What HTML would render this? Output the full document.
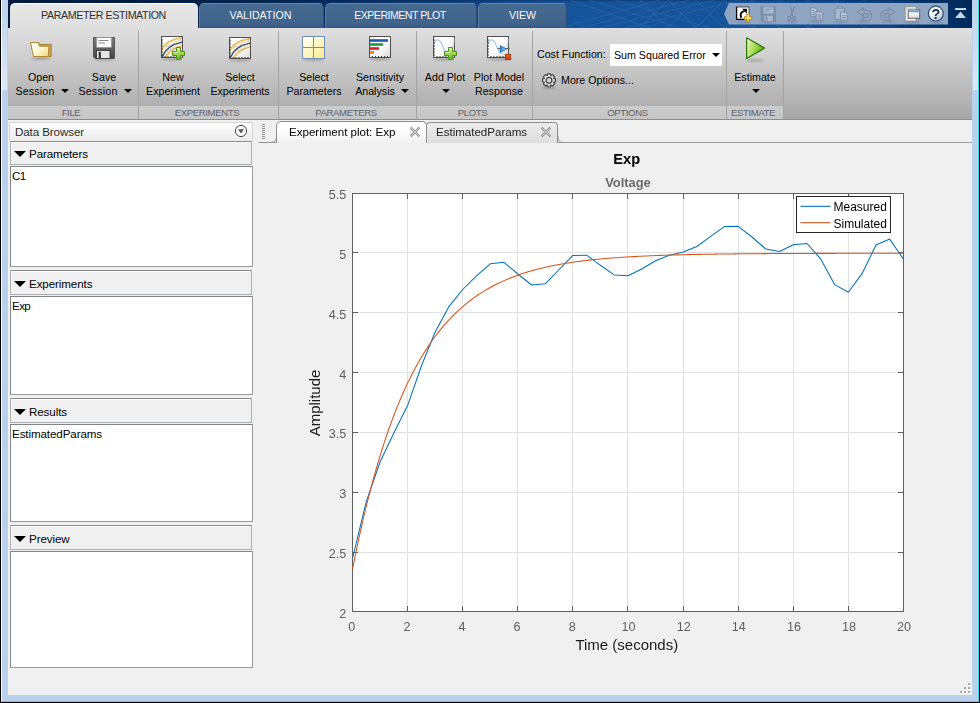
<!DOCTYPE html>
<html>
<head>
<meta charset="utf-8">
<title>Parameter Estimation</title>
<style>
html,body{margin:0;padding:0;}
body{width:980px;height:703px;overflow:hidden;background:#f0f0f0;position:relative;font-family:"Liberation Sans",sans-serif;}
.abs{position:absolute;}
#frame-l0{left:0;top:0;width:1px;height:703px;background:#000;}
#frame-l1{left:1px;top:0;width:1px;height:702px;background:#fff;}
#frame-l2{left:2px;top:0;width:6px;height:701px;background:#b9d1ea;}
#frame-r2{left:972px;top:0;width:6px;height:701px;background:#b9d1ea;}
#frame-r1{left:978px;top:0;width:1px;height:702px;background:#3fd7f3;}
#frame-r0{left:979px;top:0;width:1px;height:703px;background:#000;}
#frame-b2{left:2px;top:695px;width:976px;height:6px;background:#b9d1ea;}
#frame-b1{left:1px;top:701px;width:978px;height:1px;background:#3fd7f3;}
#frame-b0{left:0;top:702px;width:980px;height:1px;background:#000;}
/* header */
#hdr{left:8px;top:0;width:964px;height:28px;background:linear-gradient(180deg,rgba(0,20,50,0.35) 0px,rgba(0,20,50,0) 2px),linear-gradient(90deg,#001c40 0px,#00224c 190px,#052f66 330px,#0e4486 470px,#15539a 560px,#15539a 780px,#0b4282 880px,#002e64 945px,#002a5c 964px);}
.tab{top:3px;height:25px;box-sizing:border-box;text-align:center;font-size:10.67px;line-height:24px;white-space:nowrap;}
.tab.on{background:linear-gradient(#e6e6e6,#dfdfdf);border-top:1px solid #fff;border-radius:5px 5px 0 0;color:#303030;letter-spacing:-0.5px;}
.tab.off{height:25px;background:linear-gradient(#46698f 0%,#41648c 80%,#36587f 100%);border-top:1px solid #6486ad;border-left:1px solid #5a7ca5;border-right:1px solid #2e4f78;border-radius:5px 5px 0 0;color:#f4f6fa;line-height:22px;}
#qab{left:724px;top:3px;width:224px;height:22px;background:#8fa3bf;}
/* toolstrip */
#ts{left:8px;top:28px;width:964px;height:91px;background:linear-gradient(#dfdfdf 0%,#d6d6d6 20%,#c5c5c5 48%,#b4b4b4 78%,#a6a6a6 100%);}
#tsband{left:8px;top:106px;width:776px;height:13px;background:linear-gradient(#cccccc,#c5c5c5);}
#tsline{left:8px;top:119px;width:964px;height:1px;background:#8c8c8c;}
.sep{top:31px;width:1px;height:88px;background:#a3a3a3;}
.seclab{top:106px;height:13px;line-height:13px;font-size:9.6px;color:#5e636e;text-align:center;letter-spacing:-0.4px;}
.btnlab{font-size:10.67px;line-height:14px;color:#000;text-align:center;white-space:nowrap;}
.tri{width:0;height:0;border-left:4px solid transparent;border-right:4px solid transparent;border-top:4px solid #000;}
/* data browser */
.seg{font-family:"Liberation Sans",sans-serif;font-size:11.6px;color:#000;white-space:nowrap;}
#dbtitle{left:9px;top:122px;width:244px;height:19px;box-sizing:border-box;border:1px solid #d5d5d5;border-bottom:none;background:linear-gradient(#fdfdfd,#ececec);}
.phead{left:10px;width:242px;height:24px;box-sizing:border-box;border:1px solid #aeaeae;border-top-color:#8c8c8c;background:#f0f0f0;box-shadow:inset 1px 1px 0 #fbfbfb;}
.pbox{left:10px;width:243px;box-sizing:border-box;border:1px solid #7f848d;border-right-color:#9a9a9a;border-bottom-color:#9a9a9a;background:#fff;}
.ptri{width:0;height:0;border-left:6px solid transparent;border-right:6px solid transparent;border-top:6px solid #000;}
.grip{width:2px;height:2px;background:#aca899;box-shadow:1px 1px 0 #fff;}
#plotsvg{will-change:transform;}
</style>
</head>
<body>
<!-- window frame -->
<div class="abs" id="hdr"></div>
<div class="abs" id="ts"></div>
<div class="abs" id="tsband"></div>
<div class="abs" id="tsline"></div>

<!-- MESH -->
<svg class="abs" style="left:540px;top:0" width="432" height="28" viewBox="0 0 432 28">
  <defs><linearGradient id="gMM" x1="0" y1="0" x2="1" y2="0"><stop offset="0" stop-color="#fff"/><stop offset="0.7" stop-color="#fff"/><stop offset="0.9" stop-color="#000"/></linearGradient><mask id="meshMask"><rect x="0" y="0" width="432" height="28" fill="url(#gMM)"/></mask></defs>
  <g stroke="#7fa6d8" stroke-width="0.700" fill="none" opacity="0.220" mask="url(#meshMask)">
    <path d="M20 28 L120 0 M40 28 L150 0 M60 28 L175 0 M85 28 L200 0 M30 0 L110 28 M50 0 L140 28 M75 0 L170 28"/>
    <path d="M100 28 L128 0 M128 28 L156 0 M156 28 L184 0 M184 28 L212 0 M212 28 L240 0 M240 28 L268 0 M268 28 L296 0 M296 28 L324 0 M324 28 L352 0 M352 28 L380 0 M380 28 L408 0 M408 28 L432 4"/>
    <path d="M100 0 L128 28 M128 0 L156 28 M156 0 L184 28 M184 0 L212 28 M212 0 L240 28 M240 0 L268 28 M268 0 L296 28 M296 0 L324 28 M324 0 L352 28 M352 0 L380 28 M380 0 L408 28 M408 0 L432 24"/>
  </g>
</svg>
<!-- /MESH -->
<!-- tabs -->
<div class="abs tab on" style="left:10px;width:188px;letter-spacing:-0.4px;padding-right:1px;line-height:22px;">PARAMETER ESTIMATION</div>
<div class="abs tab off" style="left:199px;width:125px;padding-right:2px;">VALIDATION</div>
<div class="abs tab off" style="left:325px;width:152px;letter-spacing:-0.55px;padding-right:2px;">EXPERIMENT PLOT</div>
<div class="abs tab off" style="left:478px;width:89px;">VIEW</div>
<!-- QAB -->
<svg class="abs" style="left:720px;top:0;will-change:transform" width="252" height="28" viewBox="720 0 252 28">
  <defs>
    <linearGradient id="gHelp" x1="0.2" y1="0" x2="0.7" y2="1"><stop offset="0" stop-color="#ffffff"/><stop offset="0.5" stop-color="#eef3f7"/><stop offset="1" stop-color="#b4c4d4"/></linearGradient><linearGradient id="gWin" x1="0" y1="0" x2="0" y2="1"><stop offset="0.3" stop-color="#ffffff"/><stop offset="1" stop-color="#d6d6d6"/></linearGradient>
    <linearGradient id="gYel" x1="0" y1="0" x2="0" y2="1"><stop offset="0" stop-color="#fff6b0"/><stop offset="1" stop-color="#f2c21a"/></linearGradient>
    <filter id="blur2" x="-20%" y="-150%" width="140%" height="400%"><feGaussianBlur stdDeviation="0.9"/></filter>
  </defs>
  <path d="M724 13.700 L729 3 L948 3 L948 24.500 L729 24.500 Z" fill="#90a5c2"/>
  <!-- shadows -->
  <g fill="#5f7698" opacity="0.55" filter="url(#blur2)">
    <ellipse cx="743" cy="21.800" rx="7" ry="1"/><ellipse cx="768" cy="22.300" rx="7" ry="1"/><ellipse cx="792" cy="22" rx="5" ry="1"/>
    <ellipse cx="816" cy="21.600" rx="7" ry="1"/><ellipse cx="841" cy="21.900" rx="7" ry="1"/><ellipse cx="864" cy="21.600" rx="7" ry="1"/>
    <ellipse cx="888" cy="21.600" rx="7" ry="1"/><ellipse cx="912" cy="22.200" rx="8" ry="1"/><ellipse cx="936" cy="22.400" rx="7" ry="1"/>
  </g>
  <!-- shortcut -->
  <rect x="736.500" y="7" width="12.500" height="12.500" fill="#fff" stroke="#2a2a2a" stroke-width="0.800"/>
  <path d="M736.600 7v12.300h12.400" fill="none" stroke="#000" stroke-width="1.300"/>
  <path d="M741.200 17.800 C739.600 14 741.300 11.600 744.600 11" fill="none" stroke="#111" stroke-width="2.100"/>
  <path d="M742 8.800 L747 8.800 L747 13.800 Z" fill="#111"/>
  <path d="M746.700 14.300h2.800v2.400h2.400v2.800h-2.400v2.400h-2.800v-2.400h-2.400v-2.800h2.400z" fill="url(#gYel)" stroke="#b8860b" stroke-width="0.900" stroke-linejoin="round"/>
  <!-- save disabled -->
  <path d="M761 7 h14.500 v14.500 h-13.300 l-1.200 -1.200 z" fill="#7e8fa9" stroke="#7686a0" stroke-width="0.600"/>
  <rect x="763.300" y="7.300" width="10" height="6.200" fill="#afbed3"/>
  <path d="M764.500 9.200h7.500M764.500 11.300h5" stroke="#7e8fa9" stroke-width="0.900"/>
  <rect x="764.300" y="15.800" width="8.500" height="5.600" fill="#aab9ce"/>
  <rect x="765.500" y="16.600" width="2" height="4.800" fill="#7e8fa9"/>
  <!-- cut -->
  <path d="M790.300 6.500 L792.800 16 M794.800 6.500 L790.800 16" fill="none" stroke="#7787a1" stroke-width="1.100"/>
  <ellipse cx="789.300" cy="18.500" rx="1.500" ry="2.300" fill="none" stroke="#7787a1" stroke-width="1.100"/>
  <ellipse cx="794.300" cy="18.500" rx="1.500" ry="2.300" fill="none" stroke="#7787a1" stroke-width="1.100"/>
  <!-- copy -->
  <g fill="#b3c2d7" stroke="#7787a1" stroke-width="0.900">
    <path d="M810.500 7.800h4.500l2.300 2.300v6.200h-6.800z"/>
    <path d="M816 11.500h4.500l2.300 2.300v6.500h-6.800z"/>
  </g>
  <path d="M811.800 10.500h2.500M811.800 12.500h3.500M811.800 14.500h3.500M817.300 15h4M817.300 17h4M817.300 18.800h4" stroke="#7787a1" stroke-width="0.800"/>
  <!-- paste -->
  <path d="M835 8.300h9.800v11h-9.800z" fill="#a7b6cc" stroke="#7787a1" stroke-width="0.900"/>
  <path d="M837.800 8.300v-1.500h4.200v1.500" fill="#b3c2d7" stroke="#7787a1" stroke-width="0.900"/>
  <path d="M840.500 12h4.500l2.300 2.300v6.500h-6.800z" fill="#b8c6da" stroke="#7787a1" stroke-width="0.900"/>
  <path d="M841.800 15.500h4M841.800 17.300h4M841.800 19.100h4" stroke="#7787a1" stroke-width="0.800"/>
  <!-- undo -->
  <path d="M857.300 12 L863.300 7.800 L863.300 10.300 L866.300 10.300 C869.900 10.300 871.600 12.700 871.600 15.400 C871.600 18.200 869.700 20.500 866.300 20.500 L862.800 20.500 L862.800 17.400 L866 17.400 C867.600 17.400 868.300 16.500 868.300 15.400 C868.300 14.300 867.600 13.500 866 13.500 L863.300 13.500 L863.300 16.200 Z" fill="#93a4bc" stroke="#7787a1" stroke-width="1" stroke-linejoin="round"/>
  <!-- redo -->
  <path d="M894.900 12 L888.900 7.800 L888.900 10.300 L885.900 10.300 C882.300 10.300 880.600 12.700 880.600 15.400 C880.600 18.200 882.500 20.500 885.900 20.500 L889.400 20.500 L889.400 17.400 L886.200 17.400 C884.600 17.400 883.900 16.500 883.900 15.400 C883.900 14.300 884.600 13.500 886.200 13.500 L888.900 13.500 L888.900 16.200 Z" fill="#93a4bc" stroke="#7787a1" stroke-width="1" stroke-linejoin="round"/>
  <!-- windows -->
  <rect x="905.200" y="6.800" width="11" height="14.200" fill="#f4f4f4" stroke="#8a8a8a" stroke-width="0.800"/>
  <path d="M905.600 8.800h10.200" stroke="#bdbdbd" stroke-width="0.900"/>
  <rect x="904.300" y="14.300" width="1.800" height="1.800" fill="#e8e8e8" stroke="#8a8a8a" stroke-width="0.500"/>
  <rect x="908.200" y="10" width="11.500" height="8.300" fill="url(#gWin)" stroke="#5a5a5a" stroke-width="0.900"/>
  <rect x="908.700" y="10.500" width="10.500" height="1.800" fill="#6aa2d8"/>
  <!-- help -->
  <circle cx="935.800" cy="13.600" r="7.400" fill="url(#gHelp)" stroke="#2c4c78" stroke-width="1.200"/>
  <text x="935.900" y="18.700" font-family="Liberation Sans, sans-serif" font-size="14.500" font-weight="bold" fill="#1d2e48" text-anchor="middle">?</text>
  <!-- minimize -->
  <rect x="955" y="8.200" width="11" height="1.800" fill="#e8eef6"/>
  <path d="M960.500 11.600 L966 18 L955 18 Z" fill="#c9d6e4"/>
</svg>
<!-- /QAB -->

<!-- TOOLSTRIP-CONTENT -->
<!-- separators -->
<div class="abs sep" style="left:138px"></div>
<div class="abs sep" style="left:278px"></div>
<div class="abs sep" style="left:416px"></div>
<div class="abs sep" style="left:532px"></div>
<div class="abs sep" style="left:726px"></div>
<div class="abs sep" style="left:783px"></div>
<!-- section labels -->
<div class="abs seclab" style="left:8px;width:126px;">FILE</div>
<div class="abs seclab" style="left:138px;width:138px;">EXPERIMENTS</div>
<div class="abs seclab" style="left:278px;width:136px;">PARAMETERS</div>
<div class="abs seclab" style="left:416px;width:113px;">PLOTS</div>
<div class="abs seclab" style="left:532px;width:191px;">OPTIONS</div>
<div class="abs seclab" style="left:726px;width:54px;">ESTIMATE</div>

<!-- icon: open folder -->
<svg class="abs" style="left:26px;top:34px" width="30" height="30" viewBox="0 0 30 30">
  <defs>
    <linearGradient id="gFold" x1="0" y1="0" x2="1" y2="1"><stop offset="0" stop-color="#ffffff"/><stop offset="0.45" stop-color="#fffbe0"/><stop offset="1" stop-color="#f3d96a"/></linearGradient>
    <filter id="blur1" x="-20%" y="-100%" width="140%" height="300%"><feGaussianBlur stdDeviation="1.1"/></filter>
  </defs>
  <ellipse cx="15" cy="24.3" rx="10" ry="1.3" fill="#707070" opacity="0.55" filter="url(#blur1)"/>
  <path d="M4.500 8.500 L12.500 8.500 L14 10.500 L25.300 10.500 L25 22.500 L8 22.500 Z" fill="#cfa650" stroke="#9c7424" stroke-width="0.900"/>
  <path d="M4.500 8.500 L12 8.500 L13.500 12.300 L22.800 12.300 L22.300 22.500 L7.500 22.500 Z" fill="url(#gFold)" stroke="#ad8430" stroke-width="0.900"/>
</svg>
<!-- icon: save -->
<svg class="abs" style="left:90px;top:34px" width="30" height="30" viewBox="0 0 30 30">
  <defs>
    <linearGradient id="gSave" x1="0" y1="0" x2="0" y2="1"><stop offset="0" stop-color="#7c7c7c"/><stop offset="1" stop-color="#444444"/></linearGradient>
  </defs>
  <ellipse cx="14" cy="25.6" rx="10" ry="1.2" fill="#707070" opacity="0.5" filter="url(#blur1)"/>
  <path d="M3.500 3.500 L24.500 3.500 L24.500 24.500 L5 24.500 L3.500 23 Z" fill="url(#gSave)" stroke="#5a5a5a" stroke-width="1"/>
  <rect x="6.5" y="3.5" width="15" height="10" fill="#fafafa" stroke="#8a8a8a" stroke-width="0.6"/>
  <rect x="8.5" y="6" width="10" height="1" fill="#8a8a8a"/>
  <rect x="8.5" y="8.5" width="6.5" height="1" fill="#8a8a8a"/>
  <rect x="6.5" y="16.5" width="13.5" height="8" fill="#e6e6e6" stroke="#2f2f2f" stroke-width="0.8"/>
  <rect x="8.7" y="17.8" width="2.2" height="6.4" fill="#333"/>
</svg>
<div class="abs btnlab" style="left:11px;top:70px;width:60px;">Open</div>
<div class="abs btnlab" style="left:5px;top:84px;width:60px;letter-spacing:0.15px;">Session</div>
<div class="abs tri" style="left:61px;top:89px;"></div>
<div class="abs btnlab" style="left:74px;top:70px;width:60px;">Save</div>
<div class="abs btnlab" style="left:68px;top:84px;width:60px;letter-spacing:0.15px;">Session</div>
<div class="abs tri" style="left:124px;top:89px;"></div>

<!-- icon: new experiment -->
<svg class="abs" style="left:158px;top:33px" width="32" height="32" viewBox="0 0 32 32">
  <defs>
    <linearGradient id="gPlus" x1="0" y1="0" x2="0" y2="1"><stop offset="0" stop-color="#dcf5a0"/><stop offset="0.5" stop-color="#9fd84c"/><stop offset="1" stop-color="#62b222"/></linearGradient>
    <linearGradient id="gBox" x1="0" y1="0" x2="1" y2="1"><stop offset="0.5" stop-color="#ffffff"/><stop offset="1" stop-color="#d9d9d9"/></linearGradient>
    <clipPath id="cpBox"><rect x="0.5" y="0.5" width="20" height="20"/></clipPath>
    <g id="expBox">
      <rect x="0" y="0" width="21" height="21" fill="url(#gBox)" stroke="#505050" stroke-width="1"/>
      <g clip-path="url(#cpBox)">
        <path d="M0 14 C3 7 11 2.500 21 0.500 L21 9.500 C13 11 7 15.500 3.500 22 L0 22 Z" fill="#f7ead0"/>
        <path d="M0 13 C3 6.500 11 2.500 21 1" fill="none" stroke="#e4bd5c" stroke-width="1.500"/>
        <path d="M3.500 22 C7 15 13 11 21 9.500" fill="none" stroke="#e4bd5c" stroke-width="1.500"/>
        <path d="M0.500 21 C3.500 13 10.500 7.500 21 5.500" fill="none" stroke="#1d4a86" stroke-width="1.300"/>
        <path d="M3 10.500 L6 9 L9 9.500 L12 7.500 L15 8 L17 6.500 M18 4.500 L19.500 2.500 L18.500 1.500 M5 14 L8 12.500 L11 13.500 L15 11" fill="none" stroke="#8f8f8f" stroke-width="0.400"/>
      </g>
      <path d="M0 3.500h1.500M0 6.500h1.500M0 9.500h1.500M0 12.500h1.500M0 15.500h1.500M0 18.500h1.500 M3.500 21v-1.500M6.500 21v-1.500M9.500 21v-1.500M12.500 21v-1.500M15.500 21v-1.500M18.500 21v-1.500" stroke="#303030" stroke-width="1" fill="none"/>
    </g>
    <g id="plusG">
      <path d="M4.5 0.5 h4 v4 h4 v4 h-4 v4 h-4 v-4 h-4 v-4 h4 z" fill="url(#gPlus)" stroke="#4a9418" stroke-width="1" stroke-linejoin="round"/>
      <path d="M5.5 1.6 h2 M1.6 5.5 h3.4" stroke="#f0ffd0" stroke-width="1" fill="none" opacity="0.8"/>
    </g>
  </defs>
  <ellipse cx="14" cy="26.2" rx="11" ry="1.3" fill="#707070" opacity="0.5" filter="url(#blur1)"/>
  <use href="#expBox" x="3.5" y="3.5"/>
  <use href="#plusG" x="14" y="14"/>
</svg>
<!-- icon: select experiments -->
<svg class="abs" style="left:226px;top:34px" width="32" height="32" viewBox="0 0 32 32">
  <ellipse cx="14" cy="26.2" rx="11" ry="1.3" fill="#707070" opacity="0.5" filter="url(#blur1)"/>
  <use href="#expBox" x="3.5" y="3.5"/>
</svg>
<div class="abs btnlab" style="left:143px;top:70px;width:60px;">New</div>
<div class="abs btnlab" style="left:143px;top:84px;width:60px;">Experiment</div>
<div class="abs btnlab" style="left:210px;top:70px;width:60px;">Select</div>
<div class="abs btnlab" style="left:210px;top:84px;width:60px;">Experiments</div>

<!-- icon: select parameters -->
<svg class="abs" style="left:298px;top:32px" width="32" height="32" viewBox="0 0 32 32">
  <defs>
    <linearGradient id="gGrid" x1="0" y1="0" x2="1" y2="1"><stop offset="0" stop-color="#ffffff"/><stop offset="0.25" stop-color="#fffce0"/><stop offset="1" stop-color="#fbe98a"/></linearGradient>
  </defs>
  <ellipse cx="15.5" cy="27.6" rx="11" ry="1.3" fill="#707070" opacity="0.5" filter="url(#blur1)"/>
  <rect x="4.5" y="4.5" width="22" height="22" fill="url(#gGrid)" stroke="#6f8fb8" stroke-width="1"/>
  <path d="M15.5 4.5v22M4.5 15.5h22" stroke="#6f8fb8" stroke-width="1" fill="none"/>
</svg>
<!-- icon: sensitivity -->
<svg class="abs" style="left:365px;top:33px" width="32" height="32" viewBox="0 0 32 32">
  <ellipse cx="15" cy="26" rx="11" ry="1.3" fill="#707070" opacity="0.5" filter="url(#blur1)"/>
  <rect x="4.5" y="3.5" width="21" height="21" fill="url(#gBox)" stroke="#505050" stroke-width="1"/>
  <rect x="5" y="6.2" width="18" height="2.6" fill="#1b5bb0"/>
  <rect x="5" y="10.2" width="13" height="2.6" fill="#1f9a40"/>
  <rect x="5" y="14.2" width="9" height="2.6" fill="#d9202b"/>
  <rect x="5" y="18.2" width="4" height="2.6" fill="#e07f1c"/>
  <path d="M7.5 24.500v-1.500M10.500 24.500v-1.500M13.500 24.500v-1.500M16.500 24.500v-1.500M19.500 24.500v-1.500M22.500 24.500v-1.500" stroke="#303030" stroke-width="1" fill="none"/>
</svg>
<div class="abs btnlab" style="left:284px;top:70px;width:60px;">Select</div>
<div class="abs btnlab" style="left:284px;top:84px;width:60px;">Parameters</div>
<div class="abs btnlab" style="left:350px;top:70px;width:60px;">Sensitivity</div>
<div class="abs btnlab" style="left:345px;top:84px;width:60px;">Analysis</div>
<div class="abs tri" style="left:401px;top:89px;"></div>

<!-- icon: add plot -->
<svg class="abs" style="left:429px;top:32px" width="32" height="32" viewBox="0 0 32 32">
  <defs>
    <g id="plotBox">
      <rect x="0" y="0" width="21" height="21" fill="url(#gBox)" stroke="#505050" stroke-width="1"/>
      <path d="M0.5 8 C2 2.500 5.500 2 7.500 6 C9.500 10 11 16 14 17.500" fill="none" stroke="#a9c8ea" stroke-width="1.200"/>
      <path d="M19.800 12 C20.200 9 20.400 6 20.500 2" fill="none" stroke="#c5daf0" stroke-width="0.900"/>
      <path d="M0 3.5h1.5M0 6.5h1.5M0 9.5h1.5M0 12.5h1.5M0 15.5h1.5M0 18.5h1.5 M3.5 21v-1.5M6.5 21v-1.5M9.5 21v-1.5M12.5 21v-1.5M15.5 21v-1.5M18.5 21v-1.5" stroke="#303030" stroke-width="1" fill="none"/>
    </g>
  </defs>
  <ellipse cx="15" cy="27.2" rx="11" ry="1.3" fill="#707070" opacity="0.5" filter="url(#blur1)"/>
  <use href="#plotBox" x="4.500" y="4.500"/>
  <use href="#plusG" x="15" y="15"/>
</svg>
<!-- icon: plot model response -->
<svg class="abs" style="left:483px;top:32px" width="32" height="32" viewBox="0 0 32 32">
  <defs>
    <linearGradient id="gPlay" x1="0" y1="0" x2="1" y2="0"><stop offset="0" stop-color="#2a7fd0"/><stop offset="1" stop-color="#a8d6f6"/></linearGradient>
    <linearGradient id="gStop" x1="0" y1="0" x2="0" y2="1"><stop offset="0" stop-color="#f06a2a"/><stop offset="1" stop-color="#c83808"/></linearGradient>
  </defs>
  <ellipse cx="15" cy="27.2" rx="11" ry="1.3" fill="#707070" opacity="0.5" filter="url(#blur1)"/>
  <use href="#plotBox" x="4.500" y="4.500"/>
  <path d="M14.5 16.5 h3 M22 16.5 h4.5" stroke="#606060" stroke-width="1"/>
  <path d="M17.200 13.600 L23.800 17 L17.200 20.400 Z" fill="url(#gPlay)" stroke="#1a62ae" stroke-width="0.700"/>
  <rect x="22.300" y="22.300" width="5.400" height="5.400" fill="url(#gStop)" stroke="#a03008" stroke-width="0.8"/>
</svg>
<div class="abs btnlab" style="left:415px;top:70px;width:60px;">Add Plot</div>
<div class="abs tri" style="left:442px;top:89px;"></div>
<div class="abs btnlab" style="left:469px;top:70px;width:60px;">Plot Model</div>
<div class="abs btnlab" style="left:469px;top:84px;width:60px;">Response</div>

<!-- options -->
<div class="abs btnlab" style="left:537px;top:47px;text-align:left;">Cost Function:</div>
<div class="abs" style="left:610px;top:44px;width:112px;height:22px;background:#fff;"></div>
<div class="abs btnlab" style="left:614px;top:48px;text-align:left;letter-spacing:0px;">Sum Squared Error</div>
<div class="abs tri" style="left:712px;top:53px;"></div>
<svg class="abs" style="left:539px;top:70px" width="20" height="20" viewBox="0 0 20 20">
  <defs><radialGradient id="gGear" cx="0.4" cy="0.35" r="0.7"><stop offset="0" stop-color="#ffffff"/><stop offset="1" stop-color="#d4d4d4"/></radialGradient></defs>
  <ellipse cx="10" cy="17.800" rx="6.500" ry="1" fill="#606060" opacity="0.500" filter="url(#blur1)"/>
  <g transform="translate(10,10.300)">
    <path d="M-1.82 -4.66 L-1.47 -6.44 L1.47 -6.44 L1.82 -4.66 L2.00 -4.58 L3.51 -5.59 L5.59 -3.51 L4.58 -2.00 L4.66 -1.82 L6.44 -1.47 L6.44 1.47 L4.66 1.82 L4.58 2.00 L5.59 3.51 L3.51 5.59 L2.00 4.58 L1.82 4.66 L1.47 6.44 L-1.47 6.44 L-1.82 4.66 L-2.00 4.58 L-3.51 5.59 L-5.59 3.51 L-4.58 2.00 L-4.66 1.82 L-6.44 1.47 L-6.44 -1.47 L-4.66 -1.82 L-4.58 -2.00 L-5.59 -3.51 L-3.51 -5.59 L-2.00 -4.58 Z" fill="url(#gGear)" stroke="#3a3a3a" stroke-width="1.150" stroke-linejoin="round"/>
    <circle cx="0" cy="0" r="3" fill="#d2d2d2" stroke="#333" stroke-width="1.200"/>
  </g>
</svg>
<div class="abs btnlab" style="left:561px;top:73px;text-align:left;">More Options...</div>

<!-- estimate -->
<svg class="abs" style="left:740px;top:33px" width="32" height="32" viewBox="0 0 32 32">
  <defs>
    <linearGradient id="gGo" x1="0" y1="0" x2="1" y2="0.35"><stop offset="0" stop-color="#f0fbd6"/><stop offset="0.45" stop-color="#b0e05e"/><stop offset="1" stop-color="#62b418"/></linearGradient>
  </defs>
  <ellipse cx="15" cy="27.400" rx="9" ry="1.200" fill="#707070" opacity="0.5" filter="url(#blur1)"/>
  <path d="M6.600 4.700 L24.600 15.100 L6.600 25.500 Z" fill="url(#gGo)" stroke="#2f7410" stroke-width="1.200" stroke-linejoin="round"/>
</svg>
<div class="abs btnlab" style="left:725px;top:70px;width:60px;">Estimate</div>
<div class="abs tri" style="left:752px;top:89px;"></div>
<!-- /TOOLSTRIP-CONTENT -->

<!-- DATA-BROWSER -->
<!-- data browser -->
<div class="abs" id="dbtitle"></div>
<div class="abs seg" style="left:15px;top:124px;line-height:15px;color:#2a2a2a;letter-spacing:-0.1px;">Data Browser</div>
<svg class="abs" style="left:233px;top:123px" width="16" height="16" viewBox="0 0 16 16">
  <circle cx="8" cy="8" r="5.600" fill="#fbfbfb" stroke="#4a4a4a" stroke-width="1"/>
  <path d="M5 6.200 L11 6.200 L8 10.600 Z" fill="#555"/>
</svg>

<div class="abs phead" style="top:141px;"></div>
<div class="abs ptri" style="left:14px;top:151px;"></div>
<div class="abs seg" style="left:29px;top:146px;line-height:15px;letter-spacing:-0.1px;">Parameters</div>
<div class="abs pbox" style="top:166px;height:101px;"></div>
<div class="abs seg" style="left:12px;top:168px;line-height:15px;letter-spacing:-0.5px;">C1</div>

<div class="abs phead" style="top:270px;height:25px;"></div>
<div class="abs ptri" style="left:14px;top:281px;"></div>
<div class="abs seg" style="left:29px;top:276px;line-height:15px;letter-spacing:-0.1px;">Experiments</div>
<div class="abs pbox" style="top:296px;height:99px;"></div>
<div class="abs seg" style="left:12px;top:298px;line-height:15px;letter-spacing:-0.6px;">Exp</div>

<div class="abs phead" style="top:398px;height:25px;"></div>
<div class="abs ptri" style="left:14px;top:409px;"></div>
<div class="abs seg" style="left:29px;top:404px;line-height:15px;letter-spacing:-0.1px;">Results</div>
<div class="abs pbox" style="top:424px;height:98px;"></div>
<div class="abs seg" style="left:12px;top:426px;line-height:15px;letter-spacing:-0.1px;">EstimatedParams</div>

<div class="abs phead" style="top:525px;height:25px;"></div>
<div class="abs ptri" style="left:14px;top:536px;"></div>
<div class="abs seg" style="left:29px;top:531px;line-height:15px;letter-spacing:-0.1px;">Preview</div>
<div class="abs pbox" style="top:551px;height:117px;"></div>
<!-- /DATA-BROWSER -->

<!-- DOCUMENT -->
<!-- document tabs -->
<div class="abs" style="left:259px;top:142px;width:713px;height:1px;background:#9c9c9c;"></div>
<div class="abs" style="left:262px;top:124px;width:3px;height:15px;background:repeating-linear-gradient(#8f8f8f 0,#8f8f8f 1px,transparent 1px,transparent 2px);"></div>
<div class="abs dtab" style="left:426px;top:122px;width:132px;height:21px;background:linear-gradient(#ececec,#dedede);border:1px solid #8e8e8e;border-bottom:none;border-radius:4px 4px 0 0;box-sizing:border-box;z-index:1;"></div>
<div class="abs dtab" style="left:276px;top:121px;width:151px;height:22px;background:linear-gradient(#ffffff 0%,#fbfbfb 55%,#f0f0f0 100%);border:1px solid #8e8e8e;border-bottom:none;border-radius:5px 5px 0 0;box-sizing:border-box;z-index:2;"></div>
<svg class="abs" style="left:258px;top:121px;z-index:3" width="310" height="24" viewBox="0 0 310 24">
  <path d="M1 21.500 L12 21.500 C17 21.500 18.500 19 18.500 15" fill="none" stroke="#8e8e8e" stroke-width="1"/>
  <path d="M300 15 C300 19 301 21.500 305 21.500" fill="none" stroke="#8e8e8e" stroke-width="1"/>
  <g stroke="#8e8e8e" stroke-width="2.300" fill="none" stroke-linecap="square">
    <path d="M153.500 7.500 L160.500 14.500 M160.500 7.500 L153.500 14.500"/>
    <path d="M284.500 7.500 L291.500 14.500 M291.500 7.500 L284.500 14.500"/>
  </g>
  <g stroke="#e6e6e6" stroke-width="0.800" fill="none" stroke-linecap="square">
    <path d="M153.500 7.500 L160.500 14.500 M160.500 7.500 L153.500 14.500"/>
    <path d="M284.500 7.500 L291.500 14.500 M291.500 7.500 L284.500 14.500"/>
  </g>
</svg>
<div class="abs seg" style="left:289px;top:124px;line-height:15px;z-index:4;letter-spacing:-0.03px;">Experiment plot: Exp</div>
<div class="abs seg" style="left:436px;top:124px;line-height:15px;z-index:4;letter-spacing:-0.03px;color:#222;">EstimatedParams</div>

<!-- plot -->
<svg class="abs" style="left:0;top:0" width="980" height="703" viewBox="0 0 980 703" id="plotsvg" font-family="Liberation Sans, sans-serif">
<rect x="352.5" y="193.5" width="551.0" height="418.0" fill="#fff"/>
<path d="M407.5 193.5V611.5M462.5 193.5V611.5M517.5 193.5V611.5M572.5 193.5V611.5M627.5 193.5V611.5M683.5 193.5V611.5M738.5 193.5V611.5M793.5 193.5V611.5M848.5 193.5V611.5M352.5 552.5H903.5M352.5 492.5H903.5M352.5 432.5H903.5M352.5 372.5H903.5M352.5 312.5H903.5M352.5 252.5H903.5" stroke="#e1e1e1" stroke-width="1" fill="none"/>
<rect x="352.5" y="193.5" width="551.0" height="418.0" fill="none" stroke="#606060" stroke-width="1"/>
<path d="M407.5 611.5v-5.5M407.5 193.5v5.5M462.5 611.5v-5.5M462.5 193.5v5.5M517.5 611.5v-5.5M517.5 193.5v5.5M572.5 611.5v-5.5M572.5 193.5v5.5M627.5 611.5v-5.5M627.5 193.5v5.5M683.5 611.5v-5.5M683.5 193.5v5.5M738.5 611.5v-5.5M738.5 193.5v5.5M793.5 611.5v-5.5M793.5 193.5v5.5M848.5 611.5v-5.5M848.5 193.5v5.5M352.5 552.5h5.5M903.5 552.5h-5.5M352.5 492.5h5.5M903.5 492.5h-5.5M352.5 432.5h5.5M903.5 432.5h-5.5M352.5 372.5h5.5M903.5 372.5h-5.5M352.5 312.5h5.5M903.5 312.5h-5.5M352.5 252.5h5.5M903.5 252.5h-5.5" stroke="#606060" stroke-width="1" fill="none"/>
<polyline points="352.50,558.50 366.27,501.70 380.05,462.00 393.82,433.00 407.60,405.60 421.38,366.00 435.15,332.00 448.93,306.60 462.70,289.50 476.48,275.80 490.25,263.80 504.02,262.30 517.80,274.00 531.58,285.00 545.35,283.80 559.12,269.50 572.90,255.40 586.67,255.20 600.45,265.30 614.23,274.90 628.00,275.80 641.77,269.00 655.55,260.70 669.33,255.30 683.10,252.10 696.88,246.50 710.65,236.40 724.42,226.60 738.20,226.30 751.98,237.00 765.75,249.10 779.52,251.50 793.30,244.70 807.08,243.50 820.85,259.20 834.62,284.60 848.40,292.30 862.17,273.40 875.95,245.00 889.73,239.10 903.50,259.20" fill="none" stroke="#0072bd" stroke-width="1.05" stroke-linejoin="round"/>
<polyline points="352.50,569.22 355.25,555.49 358.01,542.34 360.76,529.78 363.52,517.75 366.27,506.25 369.03,495.25 371.79,484.73 374.54,474.67 377.30,465.04 380.05,455.83 382.81,447.02 385.56,438.60 388.31,430.54 391.07,422.83 393.82,415.46 396.58,408.41 399.33,401.66 402.09,395.21 404.84,389.03 407.60,383.13 410.36,377.48 413.11,372.08 415.87,366.91 418.62,361.97 421.38,357.24 424.13,352.72 426.88,348.39 429.64,344.26 432.39,340.30 435.15,336.51 437.90,332.89 440.66,329.43 443.41,326.12 446.17,322.95 448.93,319.91 451.68,317.02 454.44,314.24 457.19,311.59 459.94,309.05 462.70,306.62 465.45,304.30 468.21,302.08 470.96,299.96 473.72,297.92 476.48,295.98 479.23,294.12 481.99,292.34 484.74,290.64 487.50,289.02 490.25,287.46 493.00,285.97 495.76,284.55 498.51,283.18 501.27,281.88 504.02,280.64 506.78,279.44 509.54,278.30 512.29,277.21 515.05,276.17 517.80,275.17 520.56,274.22 523.31,273.30 526.07,272.43 528.82,271.60 531.58,270.80 534.33,270.03 537.09,269.30 539.84,268.60 542.60,267.93 545.35,267.29 548.11,266.68 550.86,266.10 553.62,265.54 556.37,265.00 559.12,264.49 561.88,264.00 564.63,263.53 567.39,263.08 570.14,262.65 572.90,262.24 575.65,261.85 578.41,261.47 581.16,261.11 583.92,260.77 586.67,260.44 589.43,260.13 592.18,259.83 594.94,259.54 597.70,259.27 600.45,259.00 603.20,258.75 605.96,258.51 608.72,258.28 611.47,258.06 614.23,257.85 616.98,257.65 619.74,257.45 622.49,257.27 625.25,257.09 628.00,256.93 630.75,256.76 633.51,256.61 636.26,256.46 639.02,256.32 641.77,256.19 644.53,256.06 647.28,255.93 650.04,255.81 652.80,255.70 655.55,255.59 658.30,255.49 661.06,255.39 663.82,255.30 666.57,255.21 669.33,255.12 672.08,255.04 674.84,254.96 677.59,254.88 680.35,254.81 683.10,254.74 685.86,254.67 688.61,254.61 691.37,254.55 694.12,254.49 696.88,254.44 699.63,254.38 702.38,254.33 705.14,254.28 707.89,254.24 710.65,254.19 713.40,254.15 716.16,254.11 718.91,254.07 721.67,254.03 724.42,254.00 727.18,253.96 729.93,253.93 732.69,253.90 735.45,253.87 738.20,253.84 740.95,253.81 743.71,253.79 746.47,253.76 749.22,253.74 751.98,253.72 754.73,253.69 757.49,253.67 760.24,253.65 763.00,253.63 765.75,253.62 768.50,253.60 771.26,253.58 774.02,253.57 776.77,253.55 779.52,253.54 782.28,253.52 785.03,253.51 787.79,253.50 790.54,253.48 793.30,253.47 796.06,253.46 798.81,253.45 801.57,253.44 804.32,253.43 807.08,253.42 809.83,253.41 812.58,253.40 815.34,253.39 818.10,253.39 820.85,253.38 823.61,253.37 826.36,253.37 829.12,253.36 831.87,253.35 834.62,253.35 837.38,253.34 840.13,253.34 842.89,253.33 845.64,253.33 848.40,253.32 851.15,253.32 853.91,253.31 856.67,253.31 859.42,253.30 862.17,253.30 864.93,253.30 867.68,253.29 870.44,253.29 873.19,253.29 875.95,253.28 878.71,253.28 881.46,253.28 884.22,253.27 886.97,253.27 889.73,253.27 892.48,253.27 895.23,253.26 897.99,253.26 900.75,253.26 903.50,253.26" fill="none" stroke="#d95319" stroke-width="1.05" stroke-linejoin="round"/>
<g font-size="12.6" fill="#5e5e5e" text-anchor="middle">
<text x="351.8" y="631">0</text>
<text x="406.9" y="631">2</text>
<text x="462.0" y="631">4</text>
<text x="517.1" y="631">6</text>
<text x="572.2" y="631">8</text>
<text x="628.6" y="631">10</text>
<text x="683.7" y="631">12</text>
<text x="738.8" y="631">14</text>
<text x="793.9" y="631">16</text>
<text x="849.0" y="631">18</text>
<text x="904.1" y="631">20</text>
</g>
<g font-size="12.6" fill="#5e5e5e" text-anchor="end">
<text x="346.2" y="617.6">2</text>
<text x="346.2" y="558.3">2.5</text>
<text x="346.2" y="497.8">3</text>
<text x="346.2" y="438.0">3.5</text>
<text x="346.2" y="379.2">4</text>
<text x="346.2" y="318.8">4.5</text>
<text x="346.2" y="258.7">5</text>
<text x="346.2" y="198.8">5.5</text>
</g>
<text x="626.7" y="164" font-size="14.67" font-weight="bold" fill="#000" text-anchor="middle">Exp</text>
<text x="628" y="186.700" font-size="12.9" font-weight="bold" fill="#6a6a6a" text-anchor="middle">Voltage</text>
<text x="626.8" y="649.700" font-size="15" fill="#1a1a1a" text-anchor="middle">Time (seconds)</text>
<text transform="translate(320,403) rotate(-90)" font-size="15" fill="#1a1a1a" text-anchor="middle">Amplitude</text>
<rect x="796.500" y="196.500" width="94" height="36" fill="#fff" stroke="#262626" stroke-width="1"/>
<path d="M800.500 206.300H830.500" stroke="#0072bd" stroke-width="1.100"/>
<path d="M800.500 222.700H830.500" stroke="#d95319" stroke-width="1.100"/>
<text x="833.500" y="211" font-size="12" fill="#000">Measured</text>
<text x="833.500" y="228" font-size="12" fill="#000">Simulated</text>
</svg>
<div class="abs grip" style="left:960px;top:691px"></div><div class="abs grip" style="left:964px;top:691px"></div><div class="abs grip" style="left:968px;top:691px"></div>
<div class="abs grip" style="left:964px;top:687px"></div><div class="abs grip" style="left:968px;top:687px"></div>
<div class="abs grip" style="left:968px;top:683px"></div>
<!-- /DOCUMENT -->

<div class="abs" id="frame-l0"></div><div class="abs" id="frame-l1"></div><div class="abs" id="frame-l2"></div>
<div class="abs" id="frame-r2"></div><div class="abs" id="frame-r1"></div><div class="abs" id="frame-r0"></div>
<div class="abs" id="frame-hl" style="left:2px;top:0;width:5px;height:90px;background:linear-gradient(rgba(255,255,255,0.05),rgba(255,255,255,0.5));"></div><div class="abs" id="frame-hr" style="left:973px;top:0;width:5px;height:90px;background:linear-gradient(rgba(255,255,255,0.05),rgba(255,255,255,0.5));"></div>
<div class="abs" id="frame-b2"></div><div class="abs" id="frame-b1"></div><div class="abs" id="frame-b0"></div>
</body>
</html>
